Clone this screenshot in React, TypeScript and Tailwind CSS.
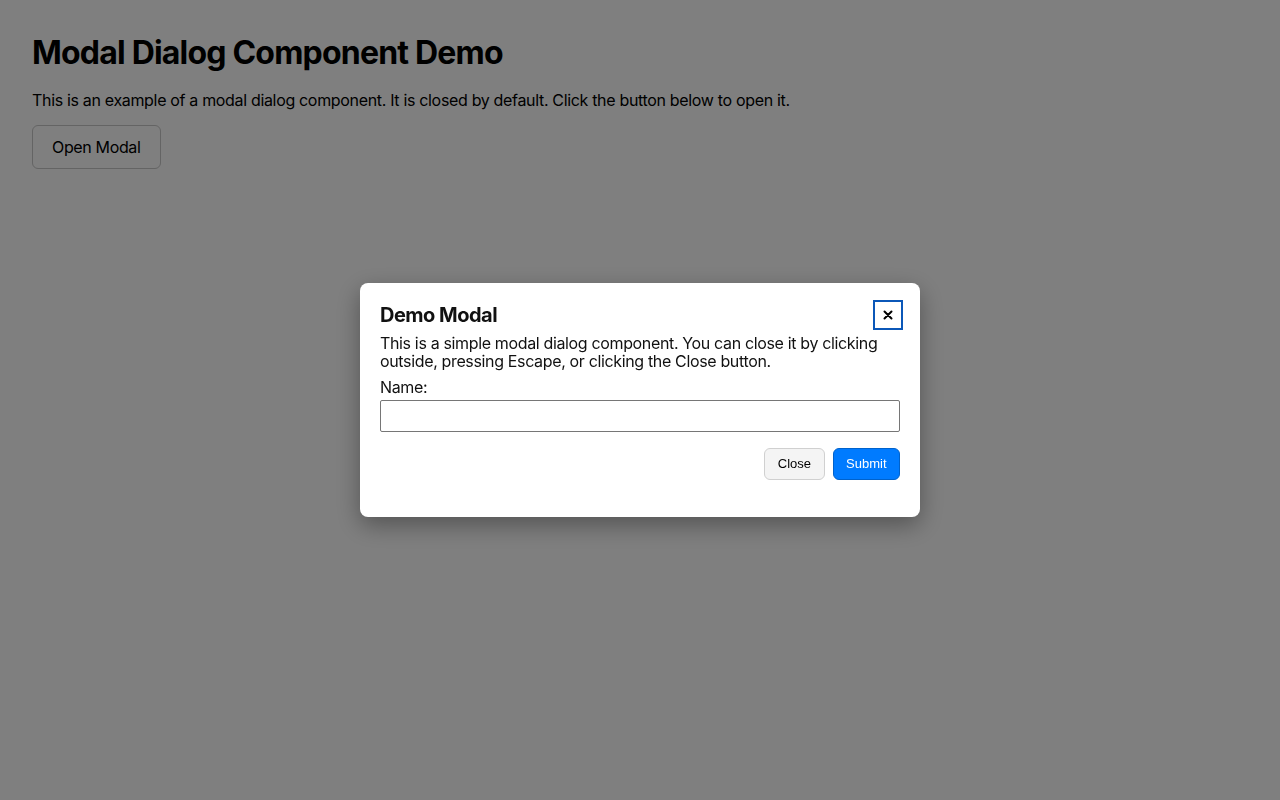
import { useState } from "react";

export default function App() {
  const [open, setOpen] = useState(true);
  const [name, setName] = useState("");

  return (
    <div className="relative min-h-[800px] bg-white px-8 pt-[34px] text-black font-['Inter',sans-serif] tracking-[-0.35px]">
      <h1 className="text-[32px] font-bold leading-[38px] mb-4 tracking-[-0.8px]">Modal Dialog Component Demo</h1>
      <p className="text-base leading-6 mb-[13px] tracking-[-0.33px]">
        This is an example of a modal dialog component. It is closed by default. Click the button below to open it.
      </p>
      <button
        type="button"
        onClick={() => setOpen(true)}
        className="h-[44px] px-[19px] rounded-md border border-[#c8c8c8] bg-white text-base"
      >
        Open Modal
      </button>

      {open && (
        <div
          className="fixed inset-0 flex items-center justify-center bg-black/50"
          onClick={() => setOpen(false)}
        >
          <div
            className="w-[560px] h-[234px] rounded-lg bg-white pt-[17px] px-5 pb-[37px] shadow-[0_8px_24px_rgba(0,0,0,0.35)] text-[#111]"
            onClick={(e) => e.stopPropagation()}
          >
            <div className="flex items-center justify-between h-[30px] -mr-[3px]">
              <h2 className="text-xl font-bold leading-6 tracking-[-0.5px]">Demo Modal</h2>
              <button
                type="button"
                onClick={() => setOpen(false)}
                className="w-[30px] h-[30px] flex items-center justify-center border-2 border-[#0b57b8] bg-white text-black"
                aria-label="Close"
              >
                <svg width="10" height="10" viewBox="0 0 10 10">
                  <path d="M1.5 1.5 L8.5 8.5 M8.5 1.5 L1.5 8.5" stroke="#000" strokeWidth="2" strokeLinecap="round" />
                </svg>
              </button>
            </div>
            <p className="mt-1 text-base leading-[18px]">
              This is a simple modal dialog component. You can close it by clicking outside, pressing Escape, or clicking the Close button.
            </p>
            <label className="block mt-2 text-base leading-[18px]">Name:</label>
            <input
              type="text"
              value={name}
              onChange={(e) => setName(e.target.value)}
              className="mt-1 block w-full h-8 border border-[#767676] rounded-[2px] px-2 text-base outline-none"
            />
            <div className="mt-4 flex justify-end gap-2 font-['Liberation_Sans',Arial,sans-serif] text-[13px] tracking-normal">
              <button
                type="button"
                onClick={() => setOpen(false)}
                className="h-8 px-[12.5px] rounded-md border border-[#d0d0d0] bg-[#f4f4f4] text-black"
              >
                Close
              </button>
              <button
                type="button"
                className="h-8 px-[12.5px] rounded-md border border-[#0062cc] bg-[#007bff] text-white"
              >
                Submit
              </button>
            </div>
          </div>
        </div>
      )}
    </div>
  );
}
